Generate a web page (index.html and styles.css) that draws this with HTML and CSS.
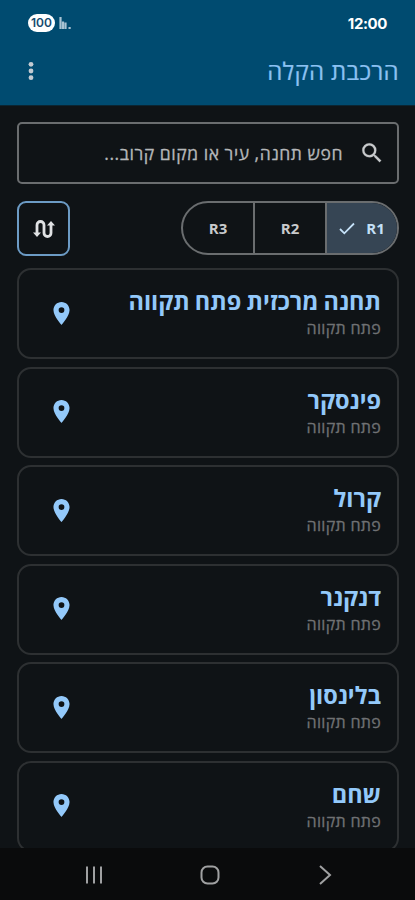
FILE: index.html
```
<!DOCTYPE html>
<html lang="he" dir="rtl">
<head>
    <meta charset="UTF-8">
    <meta name="viewport" content="width=device-width, initial-scale=1.0">
    <title>הרכבת הקלה</title>
    <link rel="stylesheet" href="styles.css">
</head>
<body>
    <header class="app-header">
        <div class="status-bar">
            <span class="clock">12:00</span>
            <div class="status-icons">
                <svg class="signal" width="12" height="12" viewBox="0 0 12 12"><path d="M1.5 0v12M4 4.5V12M6.5 5.5V12M10.6 10v2" stroke="currentColor" stroke-width="2.2"/></svg>
                <span class="battery">100</span>
            </div>
        </div>
        <div class="title-bar">
            <h1 class="app-title">הרכבת הקלה</h1>
            <button class="menu-button" aria-label="תפריט">
                <svg width="6" height="20" viewBox="0 0 6 20" fill="currentColor"><circle cx="3" cy="3.3" r="2.4"/><circle cx="3" cy="10" r="2.4"/><circle cx="3" cy="16.7" r="2.4"/></svg>
            </button>
        </div>
    </header>

    <main class="content">
        <div class="search-box">
            <svg width="26" height="26" viewBox="0 0 24 24" fill="currentColor" stroke="currentColor" stroke-width="0.2"><path d="M15.5 14h-.79l-.28-.27A6.47 6.47 0 0 0 16 9.5 6.5 6.5 0 1 0 9.5 16c1.61 0 3.09-.59 4.23-1.57l.27.28v.79l5 4.99L20.49 19zm-6 0C7.01 14 5 11.99 5 9.5S7.01 5 9.5 5 14 7.01 14 9.5 11.99 14 9.5 14z"/></svg>
            <span class="search-text">חפש תחנה, עיר או מקום קרוב...</span>
        </div>

        <div class="filters">
            <div class="segments">
                <button class="segment selected">
                    <span>R1</span>
                    <svg width="16" height="13" viewBox="0 0 16 13" fill="none" stroke="currentColor" stroke-width="1.8"><path d="M1 7l4.3 4.3L15 1.5"/></svg>
                </button>
                <button class="segment">R2</button>
                <button class="segment">R3</button>
            </div>
            <button class="swap-button" aria-label="החלף כיוון">
                <svg width="22" height="18" viewBox="0 0 22 18" fill="none" stroke="currentColor" stroke-width="2.8"><path d="M4 14V5a3.5 3.5 0 0 1 7 0v8a3.5 3.5 0 0 0 7 0V4"/><path d="M0 12.5h8L4 17zM14 5.5h8L18 1z" fill="currentColor" stroke="none"/></svg>
            </button>
        </div>

        <ul class="station-list">
            <li class="station">
                <div>
                    <h2 class="station-name">תחנה מרכזית פתח תקווה</h2>
                    <p class="station-city">פתח תקווה</p>
                </div>
                <svg class="pin" viewBox="5 2 14 20"><path d="M12 2C8.13 2 5 5.13 5 9c0 5.25 7 13 7 13s7-7.75 7-13c0-3.87-3.13-7-7-7zm0 9.5a2.5 2.5 0 0 1 0-5 2.5 2.5 0 0 1 0 5z"/></svg>
            </li>
            <li class="station">
                <div>
                    <h2 class="station-name">פינסקר</h2>
                    <p class="station-city">פתח תקווה</p>
                </div>
                <svg class="pin" viewBox="5 2 14 20"><path d="M12 2C8.13 2 5 5.13 5 9c0 5.25 7 13 7 13s7-7.75 7-13c0-3.87-3.13-7-7-7zm0 9.5a2.5 2.5 0 0 1 0-5 2.5 2.5 0 0 1 0 5z"/></svg>
            </li>
            <li class="station">
                <div>
                    <h2 class="station-name">קרול</h2>
                    <p class="station-city">פתח תקווה</p>
                </div>
                <svg class="pin" viewBox="5 2 14 20"><path d="M12 2C8.13 2 5 5.13 5 9c0 5.25 7 13 7 13s7-7.75 7-13c0-3.87-3.13-7-7-7zm0 9.5a2.5 2.5 0 0 1 0-5 2.5 2.5 0 0 1 0 5z"/></svg>
            </li>
            <li class="station">
                <div>
                    <h2 class="station-name">דנקנר</h2>
                    <p class="station-city">פתח תקווה</p>
                </div>
                <svg class="pin" viewBox="5 2 14 20"><path d="M12 2C8.13 2 5 5.13 5 9c0 5.25 7 13 7 13s7-7.75 7-13c0-3.87-3.13-7-7-7zm0 9.5a2.5 2.5 0 0 1 0-5 2.5 2.5 0 0 1 0 5z"/></svg>
            </li>
            <li class="station">
                <div>
                    <h2 class="station-name">בלינסון</h2>
                    <p class="station-city">פתח תקווה</p>
                </div>
                <svg class="pin" viewBox="5 2 14 20"><path d="M12 2C8.13 2 5 5.13 5 9c0 5.25 7 13 7 13s7-7.75 7-13c0-3.87-3.13-7-7-7zm0 9.5a2.5 2.5 0 0 1 0-5 2.5 2.5 0 0 1 0 5z"/></svg>
            </li>
            <li class="station">
                <div>
                    <h2 class="station-name">שחם</h2>
                    <p class="station-city">פתח תקווה</p>
                </div>
                <svg class="pin" viewBox="5 2 14 20"><path d="M12 2C8.13 2 5 5.13 5 9c0 5.25 7 13 7 13s7-7.75 7-13c0-3.87-3.13-7-7-7zm0 9.5a2.5 2.5 0 0 1 0-5 2.5 2.5 0 0 1 0 5z"/></svg>
            </li>
        </ul>
    </main>

    <nav class="nav-bar">
        <svg width="20" height="20" viewBox="0 0 20 20"><path d="M4 1l10 9-10 9"/></svg>
        <svg width="20" height="20" viewBox="0 0 20 20"><rect x="1.5" y="1.5" width="17" height="17" rx="6"/></svg>
        <svg width="20" height="20" viewBox="0 0 20 20"><path d="M3 1.5v17M10 1.5v17M17 1.5v17"/></svg>
    </nav>
</body>
</html>
```
FILE: styles.css
```
* {
    margin: 0;
    padding: 0;
    box-sizing: border-box;
}

body {
    font-family: 'Open Sans', 'Noto Sans', sans-serif;
    background: #0f1316;
    color: #c8cacc;
    height: 100vh;
    display: flex;
    flex-direction: column;
    overflow: hidden;
}

button {
    font-family: inherit;
    background: none;
    border: none;
    color: inherit;
}

svg {
    display: block;
    flex-shrink: 0;
}

.app-header {
    height: 106px;
    flex-shrink: 0;
    background: #004b70;
    border-bottom: 1px solid #0b2532;
}

.status-bar {
    display: flex;
    justify-content: space-between;
    align-items: center;
    height: 46px;
    padding: 0 28px;
}

.clock {
    font-family: Inter, sans-serif;
    font-size: 15px;
    font-weight: 700;
    letter-spacing: -0.4px;
    color: #fff;
}

.status-icons {
    display: flex;
    align-items: center;
    gap: 4px;
}

.signal {
    color: #a9c3d3;
}

.battery {
    width: 27px;
    height: 18px;
    border-radius: 9px;
    background: #fff;
    color: #164b70;
    font-family: Inter, sans-serif;
    font-size: 12px;
    font-weight: 600;
    line-height: 18px;
    text-align: center;
}

.title-bar {
    display: flex;
    justify-content: space-between;
    align-items: center;
    height: 49px;
    padding: 0 16px 0 28px;
}

.app-title {
    font-size: 24px;
    font-weight: 400;
    letter-spacing: 0.3px;
    color: #8bc1f2;
    -webkit-text-stroke: 0.2px;
}

.menu-button {
    color: #c3cbd2;
}

.content {
    flex: 1;
    min-height: 0;
    padding: 16px 16px 0 17px;
    overflow: hidden;
}

.search-box {
    display: flex;
    align-items: center;
    gap: 16px;
    height: 62px;
    padding: 0 12px;
    border: 2px solid #6a6d6f;
    border-radius: 5px;
}

.search-text {
    font-size: 17.5px;
    letter-spacing: 0.55px;
    white-space: nowrap;
    color: #b5b7b9;
    -webkit-text-stroke: 0.3px;
}

.filters {
    display: flex;
    justify-content: space-between;
    margin-top: 17px;
}

.segments {
    display: flex;
    width: 218px;
    height: 54px;
    border: 2px solid #6a6d6f;
    border-radius: 28px;
    overflow: hidden;
}

.segment {
    flex: 1;
    display: flex;
    align-items: center;
    justify-content: center;
    gap: 11px;
    font-size: 15px;
    font-weight: 700;
}

.segment + .segment {
    border-right: 2px solid #6a6d6f;
}

.segment.selected {
    background: #364554;
    color: #c4e0f7;
}

.swap-button {
    display: flex;
    align-items: center;
    justify-content: center;
    width: 53px;
    height: 55px;
    border: 2px solid #6c9bc5;
    border-radius: 9px;
    color: #e0e2e4;
}

.station-list {
    display: flex;
    flex-direction: column;
    gap: 7.5px;
    margin-top: 12px;
    list-style: none;
}

.station {
    display: flex;
    justify-content: space-between;
    align-items: center;
    height: 91px;
    flex-shrink: 0;
    padding: 0 16px 1px 34px;
    border: 2px solid #2d3032;
    border-radius: 14px;
}

.station-name {
    font-size: 23.5px;
    font-weight: 700;
    line-height: 30px;
    word-spacing: -1px;
    color: #93c9fa;
}

.station-city {
    font-size: 16px;
    line-height: 24px;
    letter-spacing: 0.3px;
    color: #6f7173;
    -webkit-text-stroke: 0.3px;
}

.pin {
    width: 17px;
    height: 23px;
    fill: #93c9fa;
}

.nav-bar {
    display: flex;
    justify-content: space-between;
    align-items: center;
    height: 52px;
    flex-shrink: 0;
    padding: 2px 79px 0 84px;
    background: #0a0b0c;
}

.nav-bar svg {
    fill: none;
    stroke: #a0a1a2;
    stroke-width: 2;
}
```
